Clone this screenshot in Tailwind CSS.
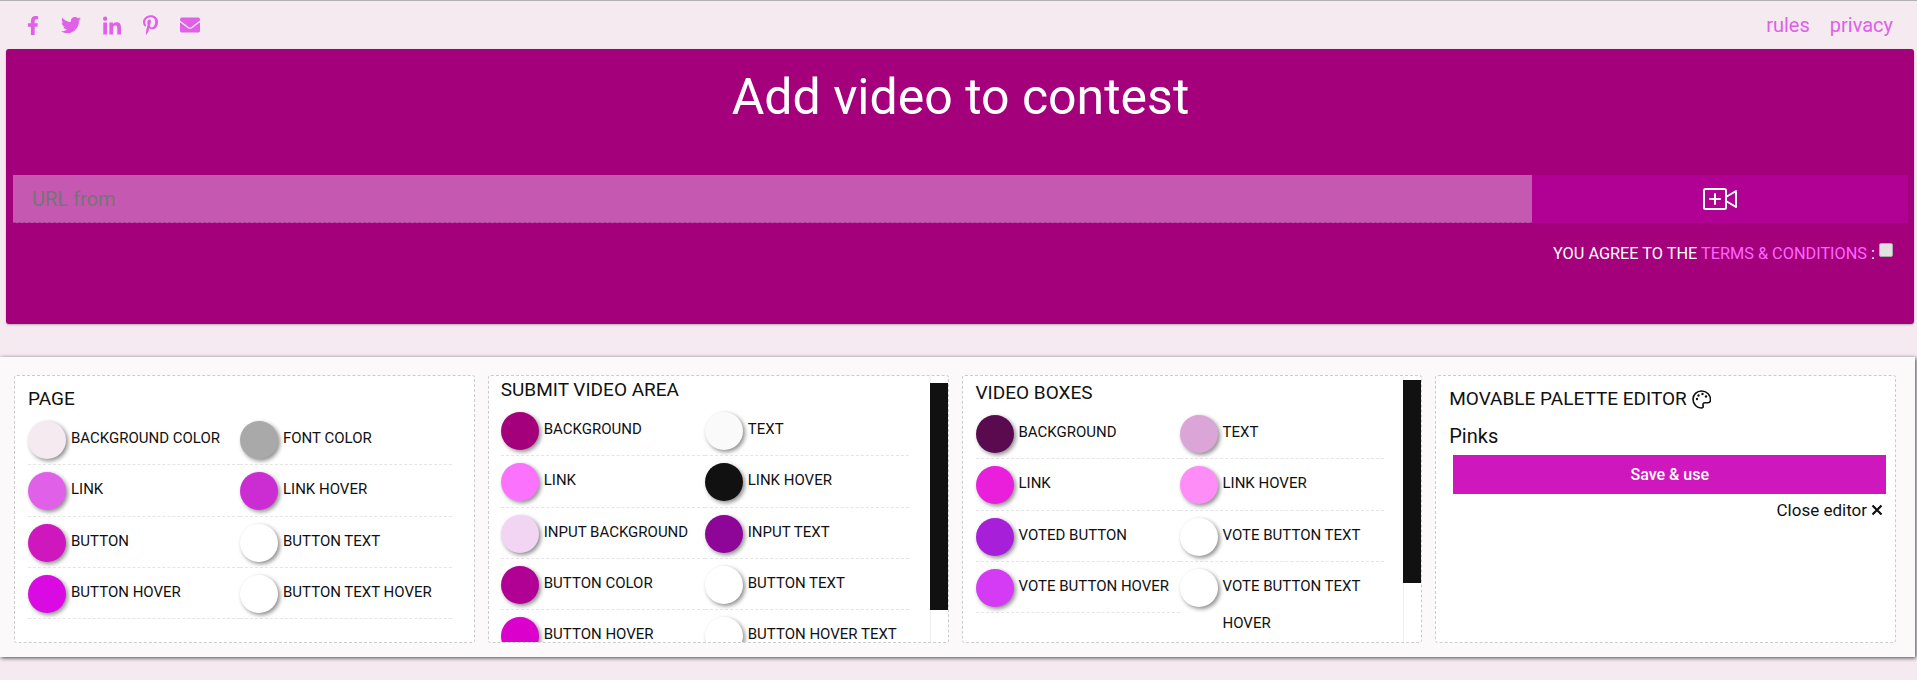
<!DOCTYPE html>
<html lang="en">
<head>
    <meta charset="UTF-8">
    <title>Add video to contest</title>
    <script src="https://cdn.jsdelivr.net/npm/@tailwindcss/browser@4"></script>
</head>
<body class="bg-[#f4eaf0] font-[Roboto,sans-serif] text-[#111] overflow-hidden h-[680px]">

    <!-- Top bar -->
    <div class="h-[49px] border-t border-[#b5b0b3] flex items-center justify-between pl-[27px] pr-[24px] text-[#e060e8]">
        <div class="flex items-center">
            <svg class="w-[12px] h-[19px] mr-[22px]" viewBox="0 0 320 512" fill="currentColor"><path d="M279.14 288l14.22-92.66h-88.91v-60.13c0-25.35 12.42-50.06 52.24-50.06h40.42V6.26S260.43 0 225.36 0c-73.22 0-121.08 44.38-121.08 124.72v70.62H22.89V288h81.39v224h100.17V288z"/></svg>
            <svg class="w-[20px] h-[20px] mr-[22px]" viewBox="0 0 512 512" fill="currentColor"><path d="M459.37 151.716c.325 4.548.325 9.097.325 13.645 0 138.72-105.583 298.558-298.558 298.558-59.452 0-114.68-17.219-161.137-47.106 8.447.974 16.568 1.299 25.34 1.299 49.055 0 94.213-16.568 130.274-44.832-46.132-.975-84.792-31.188-98.112-72.772 6.498.974 12.995 1.624 19.818 1.624 9.421 0 18.843-1.3 27.614-3.573-48.081-9.747-84.143-51.98-84.143-102.985v-1.299c13.969 7.797 30.214 12.67 47.431 13.319-28.264-18.843-46.781-51.005-46.781-87.391 0-19.492 5.197-37.36 14.294-52.954 51.655 63.675 129.3 105.258 216.365 109.807-1.624-7.797-2.599-15.918-2.599-24.04 0-57.828 46.782-104.934 104.934-104.934 30.213 0 57.502 12.67 76.67 33.137 23.715-4.548 46.456-13.32 66.599-25.34-7.798 24.366-24.366 44.833-46.132 57.827 21.117-2.273 41.584-8.122 60.426-16.243-14.292 20.791-32.161 39.308-52.628 54.253z"/></svg>
            <svg class="w-[18px] h-[19px] mr-[22px]" viewBox="0 0 448 448" fill="currentColor"><path d="M100.28 448H7.4V148.9h92.88zM53.79 108.1C24.09 108.1 0 83.5 0 53.8a53.79 53.79 0 0 1 107.58 0c0 29.7-24.1 54.3-53.79 54.3zM447.9 448h-92.68V302.4c0-34.7-.7-79.2-48.29-79.2-48.29 0-55.69 37.7-55.69 76.7V448h-92.78V148.9h89.08v40.8h1.3c12.4-23.5 42.69-48.3 87.88-48.3 94 0 111.28 61.9 111.28 142.3V448z"/></svg>
            <svg class="w-[15px] h-[20px] mr-[22px]" viewBox="0 0 384 512" fill="currentColor"><path d="M204 6.5C101.4 6.5 0 74.9 0 185.6 0 256 39.6 296 63.6 296c9.9 0 15.6-27.6 15.6-35.4 0-9.3-23.7-29.1-23.7-67.8 0-80.4 61.2-137.4 140.4-137.4 68.1 0 118.5 38.7 118.5 109.8 0 53.1-21.3 152.7-90.3 152.7-24.9 0-46.2-18-46.2-43.8 0-37.8 26.4-74.4 26.4-113.4 0-66.2-93.9-54.2-93.9 25.8 0 16.8 2.1 35.4 9.6 50.7-13.8 59.4-42 147.9-42 209.1 0 18.9 2.7 37.5 4.5 56.4 3.4 3.8 1.7 3.4 6.9 1.5 50.4-69 48.6-82.5 71.4-172.8 12.3 23.4 44.1 36 69.3 36 106.2 0 153.9-103.5 153.9-196.8C384 71.3 298.2 6.5 204 6.5z"/></svg>
            <svg class="w-[20px] h-[20px]" viewBox="0 0 512 512" fill="currentColor"><path d="M502.3 190.8c3.9-3.1 9.7-.2 9.7 4.7V400c0 26.5-21.5 48-48 48H48c-26.5 0-48-21.5-48-48V195.6c0-5 5.7-7.8 9.7-4.7 22.4 17.4 52.1 39.5 154.1 113.6 21.1 15.4 56.7 47.8 92.2 47.6 35.7.3 72-32.8 92.3-47.6 102-74.1 131.6-96.3 154-113.7zM256 320c23.2.4 56.6-29.2 73.4-41.4 132.7-96.3 142.8-104.7 173.4-128.7 5.8-4.5 9.2-11.5 9.2-18.9v-19c0-26.5-21.5-48-48-48H48C21.5 64 0 85.5 0 112v19c0 7.4 3.4 14.3 9.2 18.9 30.6 23.9 40.7 32.4 173.4 128.7 16.8 12.2 50.2 41.8 73.4 41.4z"/></svg>
        </div>
        <div class="flex gap-[20px] text-[20px]">
            <a href="#">rules</a>
            <a href="#">privacy</a>
        </div>
    </div>

    <!-- Submit area -->
    <div class="ml-[6px] mr-[3px] h-[275px] rounded-[3px] bg-[#a5007c] shadow-[0_1px_2px_rgba(0,0,0,0.25)] pl-[7px] pr-[6px] text-white">
        <h1 class="text-[50px] leading-[58px] text-center pt-[19px] h-[126px]">Add video to contest</h1>
        <div class="flex h-[48px]">
            <input class="w-[1519px] bg-[#c558b0] border-b border-dashed border-[#b0409a] px-[19px] text-[20px] placeholder:text-[#757575] outline-none" placeholder="URL from">
            <button class="flex-1 bg-[#b10094] flex items-center justify-center">
                <svg class="w-[34px] h-[24px]" viewBox="0 0 34 24" fill="none" stroke="currentColor" stroke-width="2" stroke-linejoin="round" stroke-linecap="round">
                    <rect x="1" y="2" width="22" height="20" rx="1.5"/>
                    <path d="M23 10l10-6v16l-10-6"/>
                    <path d="M12 7v10M7 12h10"/>
                </svg>
            </button>
        </div>
        <div class="flex justify-end items-start pr-[15px] pt-[20px] text-[16.3px] leading-[22px]">
            <span>YOU AGREE TO THE <a href="#" class="text-[#ff66ff]">TERMS &amp; CONDITIONS</a> :</span>
            <input type="checkbox" class="appearance-none w-[14px] h-[14px] ml-[4px] bg-[#e2e2e2] border border-[#aaa] rounded-[2px]">
        </div>
    </div>

    <!-- Palette editor -->
    <div class="mt-[33px] mr-[2px] h-[300px] bg-[#fcf9fb] shadow-[1px_1px_4px_rgba(0,0,0,0.7)] pl-[14px] pr-[19px] pt-[18px] grid grid-cols-4 gap-x-[13px]">

        <!-- Page -->
        <section class="h-[268px] border border-dashed border-[#ccc] rounded-[3px] bg-white overflow-hidden pl-[13px] pt-[11px]">
            <h2 class="text-[19px] leading-[24px] mb-[3px]">PAGE</h2>
            <div class="grid grid-cols-[212px_212px]">
                <div class="h-[51.33px] pt-[7px] border-b border-dashed border-[#e5e5e5] flex"><span class="w-[38px] h-[38px] shrink-0 rounded-full bg-[#f4eaf0] shadow-[2px_2px_4px_rgba(0,0,0,0.45)]"></span><span class="ml-[5px] -mt-[1px] text-[15px] leading-[37px]">BACKGROUND COLOR</span></div>
                <div class="h-[51.33px] pt-[7px] border-b border-dashed border-[#e5e5e5] flex"><span class="w-[38px] h-[38px] shrink-0 rounded-full bg-[#a9a9a9] shadow-[2px_2px_4px_rgba(0,0,0,0.45)]"></span><span class="ml-[5px] -mt-[1px] text-[15px] leading-[37px]">FONT COLOR</span></div>
                <div class="h-[51.33px] pt-[7px] border-b border-dashed border-[#e5e5e5] flex"><span class="w-[38px] h-[38px] shrink-0 rounded-full bg-[#e060e8] shadow-[2px_2px_4px_rgba(0,0,0,0.45)]"></span><span class="ml-[5px] -mt-[1px] text-[15px] leading-[37px]">LINK</span></div>
                <div class="h-[51.33px] pt-[7px] border-b border-dashed border-[#e5e5e5] flex"><span class="w-[38px] h-[38px] shrink-0 rounded-full bg-[#cc2dd3] shadow-[2px_2px_4px_rgba(0,0,0,0.45)]"></span><span class="ml-[5px] -mt-[1px] text-[15px] leading-[37px]">LINK HOVER</span></div>
                <div class="h-[51.33px] pt-[7px] border-b border-dashed border-[#e5e5e5] flex"><span class="w-[38px] h-[38px] shrink-0 rounded-full bg-[#ce17bd] shadow-[2px_2px_4px_rgba(0,0,0,0.45)]"></span><span class="ml-[5px] -mt-[1px] text-[15px] leading-[37px]">BUTTON</span></div>
                <div class="h-[51.33px] pt-[7px] border-b border-dashed border-[#e5e5e5] flex"><span class="w-[38px] h-[38px] shrink-0 rounded-full bg-white shadow-[2px_2px_4px_rgba(0,0,0,0.45)]"></span><span class="ml-[5px] -mt-[1px] text-[15px] leading-[37px]">BUTTON TEXT</span></div>
                <div class="h-[51.33px] pt-[7px] border-b border-dashed border-[#e5e5e5] flex"><span class="w-[38px] h-[38px] shrink-0 rounded-full bg-[#da0ae2] shadow-[2px_2px_4px_rgba(0,0,0,0.45)]"></span><span class="ml-[5px] -mt-[1px] text-[15px] leading-[37px]">BUTTON HOVER</span></div>
                <div class="h-[51.33px] pt-[7px] border-b border-dashed border-[#e5e5e5] flex"><span class="w-[38px] h-[38px] shrink-0 rounded-full bg-white shadow-[2px_2px_4px_rgba(0,0,0,0.45)]"></span><span class="ml-[5px] -mt-[1px] text-[15px] leading-[37px]">BUTTON TEXT HOVER</span></div>
            </div>
        </section>

        <!-- Submit video area -->
        <section class="h-[268px] border border-dashed border-[#ccc] rounded-[3px] bg-white overflow-hidden flex">
            <div class="flex-1 pl-[12px] pt-[2px]">
                <h2 class="text-[19px] leading-[24px] mb-[3px]">SUBMIT VIDEO AREA</h2>
                <div class="grid grid-cols-[204px_204px]">
                    <div class="h-[51.33px] pt-[7px] border-b border-dashed border-[#e5e5e5] flex"><span class="w-[38px] h-[38px] shrink-0 rounded-full bg-[#a5007c] shadow-[2px_2px_4px_rgba(0,0,0,0.45)]"></span><span class="ml-[5px] -mt-[1px] text-[15px] leading-[37px]">BACKGROUND</span></div>
                    <div class="h-[51.33px] pt-[7px] border-b border-dashed border-[#e5e5e5] flex"><span class="w-[38px] h-[38px] shrink-0 rounded-full bg-[#fafafa] shadow-[2px_2px_4px_rgba(0,0,0,0.45)]"></span><span class="ml-[5px] -mt-[1px] text-[15px] leading-[37px]">TEXT</span></div>
                    <div class="h-[51.33px] pt-[7px] border-b border-dashed border-[#e5e5e5] flex"><span class="w-[38px] h-[38px] shrink-0 rounded-full bg-[#fb73fd] shadow-[2px_2px_4px_rgba(0,0,0,0.45)]"></span><span class="ml-[5px] -mt-[1px] text-[15px] leading-[37px]">LINK</span></div>
                    <div class="h-[51.33px] pt-[7px] border-b border-dashed border-[#e5e5e5] flex"><span class="w-[38px] h-[38px] shrink-0 rounded-full bg-[#111] shadow-[2px_2px_4px_rgba(0,0,0,0.45)]"></span><span class="ml-[5px] -mt-[1px] text-[15px] leading-[37px]">LINK HOVER</span></div>
                    <div class="h-[51.33px] pt-[7px] border-b border-dashed border-[#e5e5e5] flex"><span class="w-[38px] h-[38px] shrink-0 rounded-full bg-[#f1d5f3] shadow-[2px_2px_4px_rgba(0,0,0,0.45)]"></span><span class="ml-[5px] -mt-[1px] text-[15px] leading-[37px] whitespace-nowrap">INPUT BACKGROUND</span></div>
                    <div class="h-[51.33px] pt-[7px] border-b border-dashed border-[#e5e5e5] flex"><span class="w-[38px] h-[38px] shrink-0 rounded-full bg-[#8e0698] shadow-[2px_2px_4px_rgba(0,0,0,0.45)]"></span><span class="ml-[5px] -mt-[1px] text-[15px] leading-[37px]">INPUT TEXT</span></div>
                    <div class="h-[51.33px] pt-[7px] border-b border-dashed border-[#e5e5e5] flex"><span class="w-[38px] h-[38px] shrink-0 rounded-full bg-[#b10094] shadow-[2px_2px_4px_rgba(0,0,0,0.45)]"></span><span class="ml-[5px] -mt-[1px] text-[15px] leading-[37px]">BUTTON COLOR</span></div>
                    <div class="h-[51.33px] pt-[7px] border-b border-dashed border-[#e5e5e5] flex"><span class="w-[38px] h-[38px] shrink-0 rounded-full bg-white shadow-[2px_2px_4px_rgba(0,0,0,0.45)]"></span><span class="ml-[5px] -mt-[1px] text-[15px] leading-[37px]">BUTTON TEXT</span></div>
                    <div class="h-[51.33px] pt-[7px] border-b border-dashed border-[#e5e5e5] flex"><span class="w-[38px] h-[38px] shrink-0 rounded-full bg-[#dc00cc] shadow-[2px_2px_4px_rgba(0,0,0,0.45)]"></span><span class="ml-[5px] -mt-[1px] text-[15px] leading-[37px]">BUTTON HOVER</span></div>
                    <div class="h-[51.33px] pt-[7px] border-b border-dashed border-[#e5e5e5] flex"><span class="w-[38px] h-[38px] shrink-0 rounded-full bg-white shadow-[2px_2px_4px_rgba(0,0,0,0.45)]"></span><span class="ml-[5px] -mt-[1px] text-[15px] leading-[37px]">BUTTON HOVER TEXT</span></div>
                </div>
            </div>
            <div class="w-[18px] border-l border-[#eee] pt-[7px]">
                <div class="h-[227px] bg-[#111] -ml-px"></div>
            </div>
        </section>

        <!-- Video boxes -->
        <section class="h-[268px] border border-dashed border-[#ccc] rounded-[3px] bg-white overflow-hidden flex">
            <div class="flex-1 pl-[13px] pt-[5px] min-w-0">
                <h2 class="text-[19px] leading-[24px] mb-[3px]">VIDEO BOXES</h2>
                <div class="grid grid-cols-[204px_204px]">
                    <div class="h-[51.33px] pt-[7px] border-b border-dashed border-[#e5e5e5] flex"><span class="w-[38px] h-[38px] shrink-0 rounded-full bg-[#5a0b4f] shadow-[2px_2px_4px_rgba(0,0,0,0.45)]"></span><span class="ml-[5px] -mt-[1px] text-[15px] leading-[37px]">BACKGROUND</span></div>
                    <div class="h-[51.33px] pt-[7px] border-b border-dashed border-[#e5e5e5] flex"><span class="w-[38px] h-[38px] shrink-0 rounded-full bg-[#dca5d8] shadow-[2px_2px_4px_rgba(0,0,0,0.45)]"></span><span class="ml-[5px] -mt-[1px] text-[15px] leading-[37px]">TEXT</span></div>
                    <div class="h-[51.33px] pt-[7px] border-b border-dashed border-[#e5e5e5] flex"><span class="w-[38px] h-[38px] shrink-0 rounded-full bg-[#e91fdc] shadow-[2px_2px_4px_rgba(0,0,0,0.45)]"></span><span class="ml-[5px] -mt-[1px] text-[15px] leading-[37px]">LINK</span></div>
                    <div class="h-[51.33px] pt-[7px] border-b border-dashed border-[#e5e5e5] flex"><span class="w-[38px] h-[38px] shrink-0 rounded-full bg-[#ff8df8] shadow-[2px_2px_4px_rgba(0,0,0,0.45)]"></span><span class="ml-[5px] -mt-[1px] text-[15px] leading-[37px]">LINK HOVER</span></div>
                    <div class="h-[51.33px] pt-[7px] border-b border-dashed border-[#e5e5e5] flex"><span class="w-[38px] h-[38px] shrink-0 rounded-full bg-[#a71fd8] shadow-[2px_2px_4px_rgba(0,0,0,0.45)]"></span><span class="ml-[5px] -mt-[1px] text-[15px] leading-[37px]">VOTED BUTTON</span></div>
                    <div class="h-[51.33px] pt-[7px] border-b border-dashed border-[#e5e5e5] flex"><span class="w-[38px] h-[38px] shrink-0 rounded-full bg-white shadow-[2px_2px_4px_rgba(0,0,0,0.45)]"></span><span class="ml-[5px] -mt-[1px] text-[15px] leading-[37px]">VOTE BUTTON TEXT</span></div>
                    <div class="h-[51.33px] pt-[7px] border-b border-dashed border-[#e5e5e5] flex"><span class="w-[38px] h-[38px] shrink-0 rounded-full bg-[#d53af5] shadow-[2px_2px_4px_rgba(0,0,0,0.45)]"></span><span class="ml-[5px] -mt-[1px] text-[15px] leading-[37px] whitespace-nowrap">VOTE BUTTON HOVER</span></div>
                    <div class="pt-[7px] flex"><span class="w-[38px] h-[38px] shrink-0 rounded-full bg-white shadow-[2px_2px_4px_rgba(0,0,0,0.45)]"></span><span class="ml-[5px] -mt-[1px] text-[15px] leading-[37px]">VOTE BUTTON TEXT HOVER</span></div>
                </div>
            </div>
            <div class="w-[18px] border-l border-[#eee] pt-[4px]">
                <div class="h-[203px] bg-[#111] -ml-px"></div>
            </div>
        </section>

        <!-- Movable palette editor -->
        <section class="h-[268px] border border-dashed border-[#ccc] rounded-[3px] bg-white pl-[13px] pt-[11px] pr-[8px]">
            <h2 class="text-[19px] leading-[24px] flex items-center gap-[5px]">
                MOVABLE PALETTE EDITOR
                <svg class="w-[19px] h-[19px]" viewBox="0 0 19 19" fill="none" stroke="currentColor" stroke-width="1.6">
                    <path d="M9.5 1C4.8 1 1 4.6 1 9.3c0 4.8 3.9 8.7 8.3 8.7 1.6 0 2.2-1.1 1.8-2.3-.5-1.5.2-3 1.900-3h3c1.500 0 2.500-1.100 2.500-2.800C18.500 4.600 14.500 1 9.500 1z"/>
                    <circle cx="5" cy="9" r="1.200" fill="currentColor" stroke="none"/>
                    <circle cx="6.500" cy="5.500" r="1.200" fill="currentColor" stroke="none"/>
                    <circle cx="10.500" cy="4" r="1.200" fill="currentColor" stroke="none"/>
                    <circle cx="14" cy="6.500" r="1.200" fill="currentColor" stroke="none"/>
                </svg>
            </h2>
            <p class="text-[20px] leading-[28px] mt-[11px]">Pinks</p>
            <button class="block w-[433px] h-[39px] ml-[4px] mt-[5px] bg-[#ce17bd] text-white text-[16px] font-medium">Save &amp; use</button>
            <div class="flex items-center justify-end gap-[4px] mt-[6px] pr-[4px] text-[17px] leading-[20px]">
                Close editor
                <svg class="w-[12px] h-[12px]" viewBox="0 0 12 12" stroke="currentColor" stroke-width="2.200"><path d="M1.500 1.500l9 9M10.500 1.500l-9 9"/></svg>
            </div>
        </section>
    </div>

</body>
</html>
